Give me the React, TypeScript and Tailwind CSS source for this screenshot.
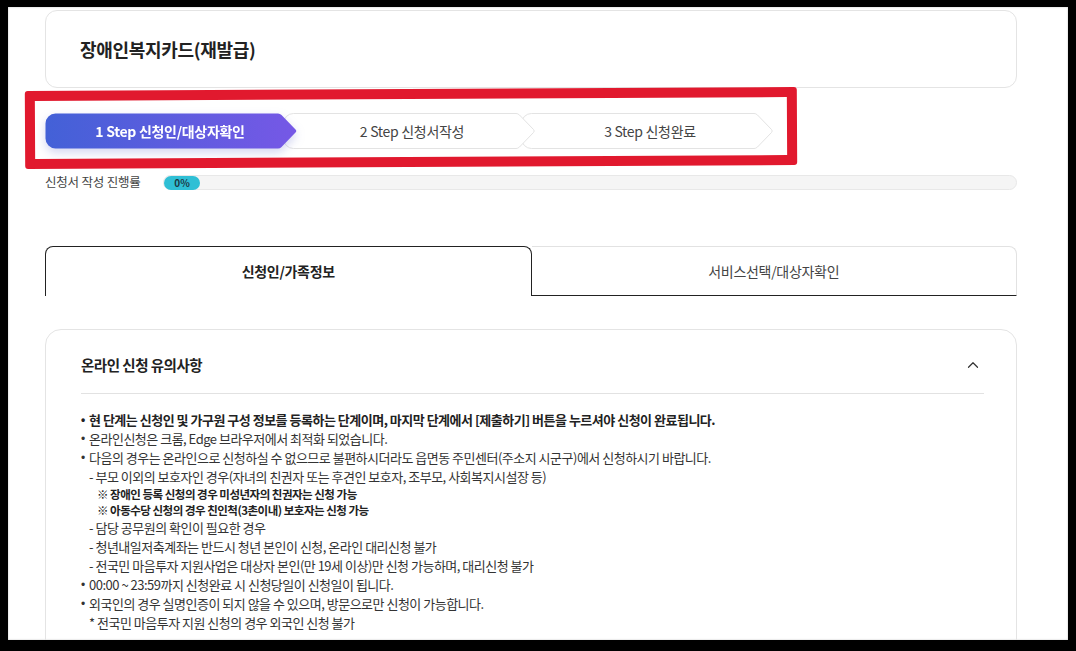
import { ChevronUp } from "lucide-react";

const steps = [
  { label: "1 Step 신청인/대상자확인", active: true, z: "z-30" },
  { label: "2 Step 신청서작성", active: false, z: "z-20" },
  { label: "3 Step 신청완료", active: false, z: "z-10" },
];

function StepShape({ active }: { active: boolean }) {
  return (
    <svg className="absolute inset-0" width="252" height="36" viewBox="0 0 252 36">
      <defs>
        <linearGradient id="stepGrad" x1="0" y1="0" x2="1" y2="0">
          <stop offset="0" stopColor="#4361d7" />
          <stop offset="1" stopColor="#7658e6" />
        </linearGradient>
      </defs>
      <path
        d="M10.5 0.5 H233 Q235 0.5 236.5 2 L250.5 16.5 Q252 18 250.5 19.5 L236.5 34 Q235 35.5 233 35.5 H10.5 A10 10 0 0 1 0.5 25.5 V10.5 A10 10 0 0 1 10.5 0.5 Z"
        fill={active ? "url(#stepGrad)" : "#ffffff"}
        stroke={active ? "none" : "#e3e3e3"}
        strokeWidth="1"
      />
    </svg>
  );
}

function Bullet({ children, bold = false }: { children: React.ReactNode; bold?: boolean }) {
  return (
    <li className={`flex h-[19px] items-center ${bold ? "font-bold text-[#222]" : ""}`}>
      <span className="w-[8px] translate-y-[1px] font-['Liberation_Sans',sans-serif] text-[12px]">•</span>
      {children}
    </li>
  );
}

export default function App() {
  return (
    <div className="w-[1076px] h-[651px] overflow-hidden bg-black pt-[7px] pl-[8px] font-['Noto_Sans_CJK_KR',sans-serif]">
      <div className="relative w-[1060px] h-[633px] overflow-hidden bg-white pl-[37px] pt-[3px] shadow-[inset_0_0_2px_#bbb]">
        {/* title card */}
        <div className="flex h-[78px] w-[972px] items-center rounded-[12px] border border-[#e4e4e4] pl-[34px]">
          <h1 className="text-[18px] font-semibold tracking-[-0.3px] text-[#222]">장애인복지카드(재발급)</h1>
        </div>

        {/* steps */}
        <div className="relative mt-[25px] flex h-[36px]">
          {steps.map((s, i) => (
            <div
              key={s.label}
              className={`relative h-[36px] w-[252px] ${s.z} ${i > 0 ? "-ml-[14px] pl-[14px] pr-[8px]" : "pr-[2px]"} ${
                s.active ? "drop-shadow-[0_4px_5px_rgba(80,90,200,0.25)]" : ""
              }`}
            >
              <StepShape active={s.active} />
              <div
                className={`relative flex h-full items-center justify-center text-[14px] tracking-[-0.3px] ${
                  s.active ? "font-bold text-white" : "text-[#444]"
                }`}
              >
                {s.label}
              </div>
            </div>
          ))}
          {/* annotation box */}
          <div className="pointer-events-none absolute left-[-20px] top-[-24px] z-40 h-[78px] w-[772px] rotate-[-0.3deg] rounded-[3px] border-[10px] border-[#e1192e]" />
        </div>

        {/* progress */}
        <div className="mt-[26px] flex h-[15px] w-[972px] items-center">
          <span className="w-[118px] text-[12.5px] tracking-[-0.2px] text-[#444]">신청서 작성 진행률</span>
          <div className="flex h-[15px] flex-1 items-center rounded-full border border-[#e8e8e8] bg-[#f5f5f5]">
            <div className="flex h-[14px] w-[36px] items-center justify-center rounded-full bg-[#2fbfd5] text-[10px] font-bold text-[#1d3b45]">
              0%
            </div>
          </div>
        </div>

        {/* tabs */}
        <div className="mt-[56px] flex h-[50px] w-[972px]">
          <div className="flex flex-1 items-center justify-center rounded-t-[8px] border border-b-0 border-[#222] text-[14px] font-bold tracking-[-0.3px] text-[#222]">
            신청인/가족정보
          </div>
          <div className="flex flex-1 items-center justify-center rounded-tr-[8px] border-t border-r border-t-[#e2e2e2] border-r-[#e2e2e2] border-b border-b-[#222] text-[14px] tracking-[-0.3px] text-[#444]">
            서비스선택/대상자확인
          </div>
        </div>

        {/* notice card */}
        <div className="mt-[33px] w-[972px] rounded-[16px] border border-[#e4e4e4] pl-[35px] pr-[32px] pt-[24px] pb-[30px]">
          <div className="flex h-[22px] items-center justify-between pr-[2px]">
            <h2 className="text-[14.5px] font-semibold tracking-[-0.5px] text-[#222]">온라인 신청 유의사항</h2>
            <ChevronUp className="h-[18px] w-[18px] text-[#333]" strokeWidth={1.6} />
          </div>
          <div className="mt-[17px] h-px bg-[#e2e2e2]" />
          <ul className="mt-[16px] text-[13px] leading-[19px] tracking-[-0.5px] text-[#333]">
            <Bullet bold>
              현 단계는 신청인 및 가구원 구성 정보를 등록하는 단계이며, 마지막 단계에서 [제출하기] 버튼을 누르셔야 신청이 완료됩니다.
            </Bullet>
            <Bullet>온라인신청은 크롬, Edge 브라우저에서 최적화 되었습니다.</Bullet>
            <Bullet>
              다음의 경우는 온라인으로 신청하실 수 없으므로 불편하시더라도 읍면동 주민센터(주소지 시군구)에서 신청하시기 바랍니다.
            </Bullet>
            <li className="flex h-[19px] items-center pl-[8px]">
              - 부모 이외의 보호자인 경우(자녀의 친권자 또는 후견인 보호자, 조부모, 사회복지시설장 등)
            </li>
            <li className="flex h-[16px] items-center pl-[16px] text-[11.5px] font-bold text-[#222]">
              ※ 장애인 등록 신청의 경우 미성년자의 친권자는 신청 가능
            </li>
            <li className="flex h-[16px] items-center pl-[16px] text-[11.5px] font-bold text-[#222]">
              ※ 아동수당 신청의 경우 친인척(3촌이내) 보호자는 신청 가능
            </li>
            <li className="flex h-[19px] items-center pl-[8px]">- 담당 공무원의 확인이 필요한 경우</li>
            <li className="flex h-[19px] items-center pl-[8px]">- 청년내일저축계좌는 반드시 청년 본인이 신청, 온라인 대리신청 불가</li>
            <li className="flex h-[19px] items-center pl-[8px]">
              - 전국민 마음투자 지원사업은 대상자 본인(만 19세 이상)만 신청 가능하며, 대리신청 불가
            </li>
            <Bullet>00:00 ~ 23:59까지 신청완료 시 신청당일이 신청일이 됩니다.</Bullet>
            <Bullet>외국인의 경우 실명인증이 되지 않을 수 있으며, 방문으로만 신청이 가능합니다.</Bullet>
            <li className="flex h-[19px] items-center pl-[8px]">* 전국민 마음투자 지원 신청의 경우 외국인 신청 불가</li>
          </ul>
        </div>
      </div>
    </div>
  );
}
